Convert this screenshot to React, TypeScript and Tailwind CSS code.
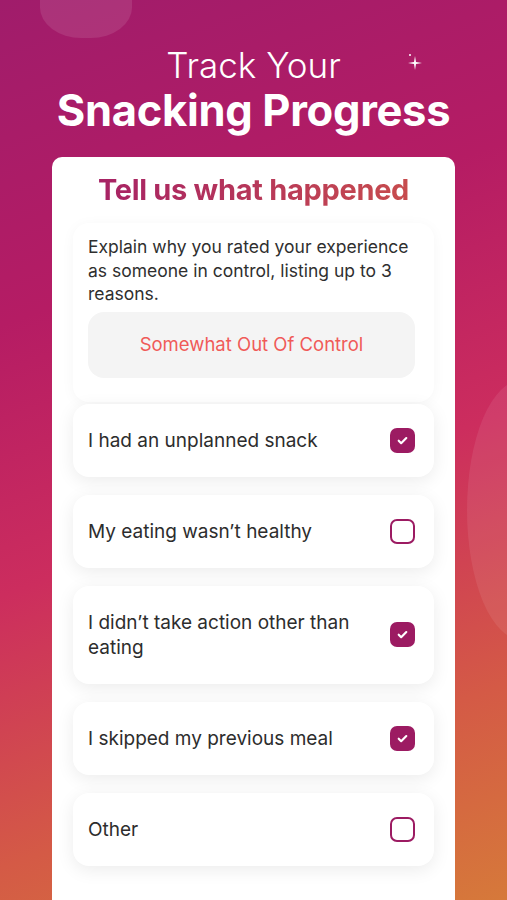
import { useState } from "react";

const reasons = [
  { label: "I had an unplanned snack", checked: true },
  { label: "My eating wasn’t healthy", checked: false },
  { label: "I didn’t take action other than eating", checked: true },
  { label: "I skipped my previous meal", checked: true },
  { label: "Other", checked: false },
];

function Checkbox({ checked }: { checked: boolean }) {
  if (checked) {
    return (
      <div className="w-[25px] h-[25px] shrink-0 rounded-[7px] bg-[#9c1b62] flex items-center justify-center">
        <svg width="13" height="13" viewBox="0 0 24 24" fill="none">
          <path d="M5 12.5l4.5 4.5L19 7.5" stroke="white" strokeWidth="4" strokeLinecap="round" strokeLinejoin="round" />
        </svg>
      </div>
    );
  }
  return <div className="w-[25px] h-[25px] shrink-0 rounded-[7px] border-[2.5px] border-[#9c1b62] bg-white" />;
}

export default function App() {
  const [items, setItems] = useState(reasons);

  const toggle = (i: number) =>
    setItems((prev) => prev.map((it, j) => (j === i ? { ...it, checked: !it.checked } : it)));

  return (
    <div
      className="relative w-full h-[900px] overflow-hidden bg-[linear-gradient(160deg,#a01c6b_0%,#b51c64_30%,#cc2d5e_55%,#d45a46_80%,#d6793a_100%)]"
      style={{ fontFamily: "Inter, 'Noto Sans', sans-serif" }}
    >
      {/* decorative blobs */}
      <div className="absolute -top-[30px] left-[40px] w-[92px] h-[68px] rounded-[45%] bg-white/10" />
      <div className="absolute top-[380px] -right-[70px] w-[110px] h-[260px] rounded-[50%] bg-white/8" />
      <svg className="absolute left-[406px] top-[52px]" width="18" height="20" viewBox="0 0 18 20">
        <path d="M9 4 L10 10 L16 11 L10 12 L9 18 L8 12 L2 11 L8 10 Z" fill="white" />
        <circle cx="4" cy="3" r="1" fill="white" />
      </svg>

      <div className="pt-[44px] text-center text-white">
        <div className="text-[35px] leading-[42px] font-light">Track Your</div>
        <div className="text-[43.5px] leading-[48px] font-bold tracking-[-0.3px]">Snacking Progress</div>
      </div>

      <div className="mx-[52px] mt-[23px] bg-white rounded-[10px] h-[900px]">
        <h2 className="pt-[14px] text-center text-[29px] leading-[38px] font-bold tracking-[-0.3px] bg-[linear-gradient(90deg,#a21c68,#cc524a)] bg-clip-text text-transparent">
          Tell us what happened
        </h2>

        <div className="mx-[21px] mt-[14px] rounded-[16px] px-[15px] pt-[12px] pb-[24px] shadow-[0_2px_14px_rgba(0,0,0,0.04)]">
          <p className="text-[17.5px] leading-[23.5px] text-[#2f2f2f] -mr-[4px]">
            Explain why you rated your experience as someone in control, listing up to 3 reasons.
          </p>
          <div className="mt-[6px] mr-[4px] h-[66px] rounded-[16px] bg-[#f4f4f4] flex items-center justify-center text-[18.5px] text-[#f05a58]">
            Somewhat Out Of Control
          </div>
        </div>

        <div className="mx-[21px] mt-[2px] flex flex-col gap-[18px]">
          {items.map((it, i) => (
            <button
              key={it.label}
              onClick={() => toggle(i)}
              className="w-full rounded-[16px] bg-white pl-[15px] pr-[19px] py-[24px] flex items-center justify-between gap-4 text-left shadow-[0_4px_18px_rgba(0,0,0,0.08)]"
            >
              <span className="text-[19px] leading-[25px] text-[#2d2d2d] max-w-[285px]">{it.label}</span>
              <Checkbox checked={it.checked} />
            </button>
          ))}
        </div>
      </div>
    </div>
  );
}
